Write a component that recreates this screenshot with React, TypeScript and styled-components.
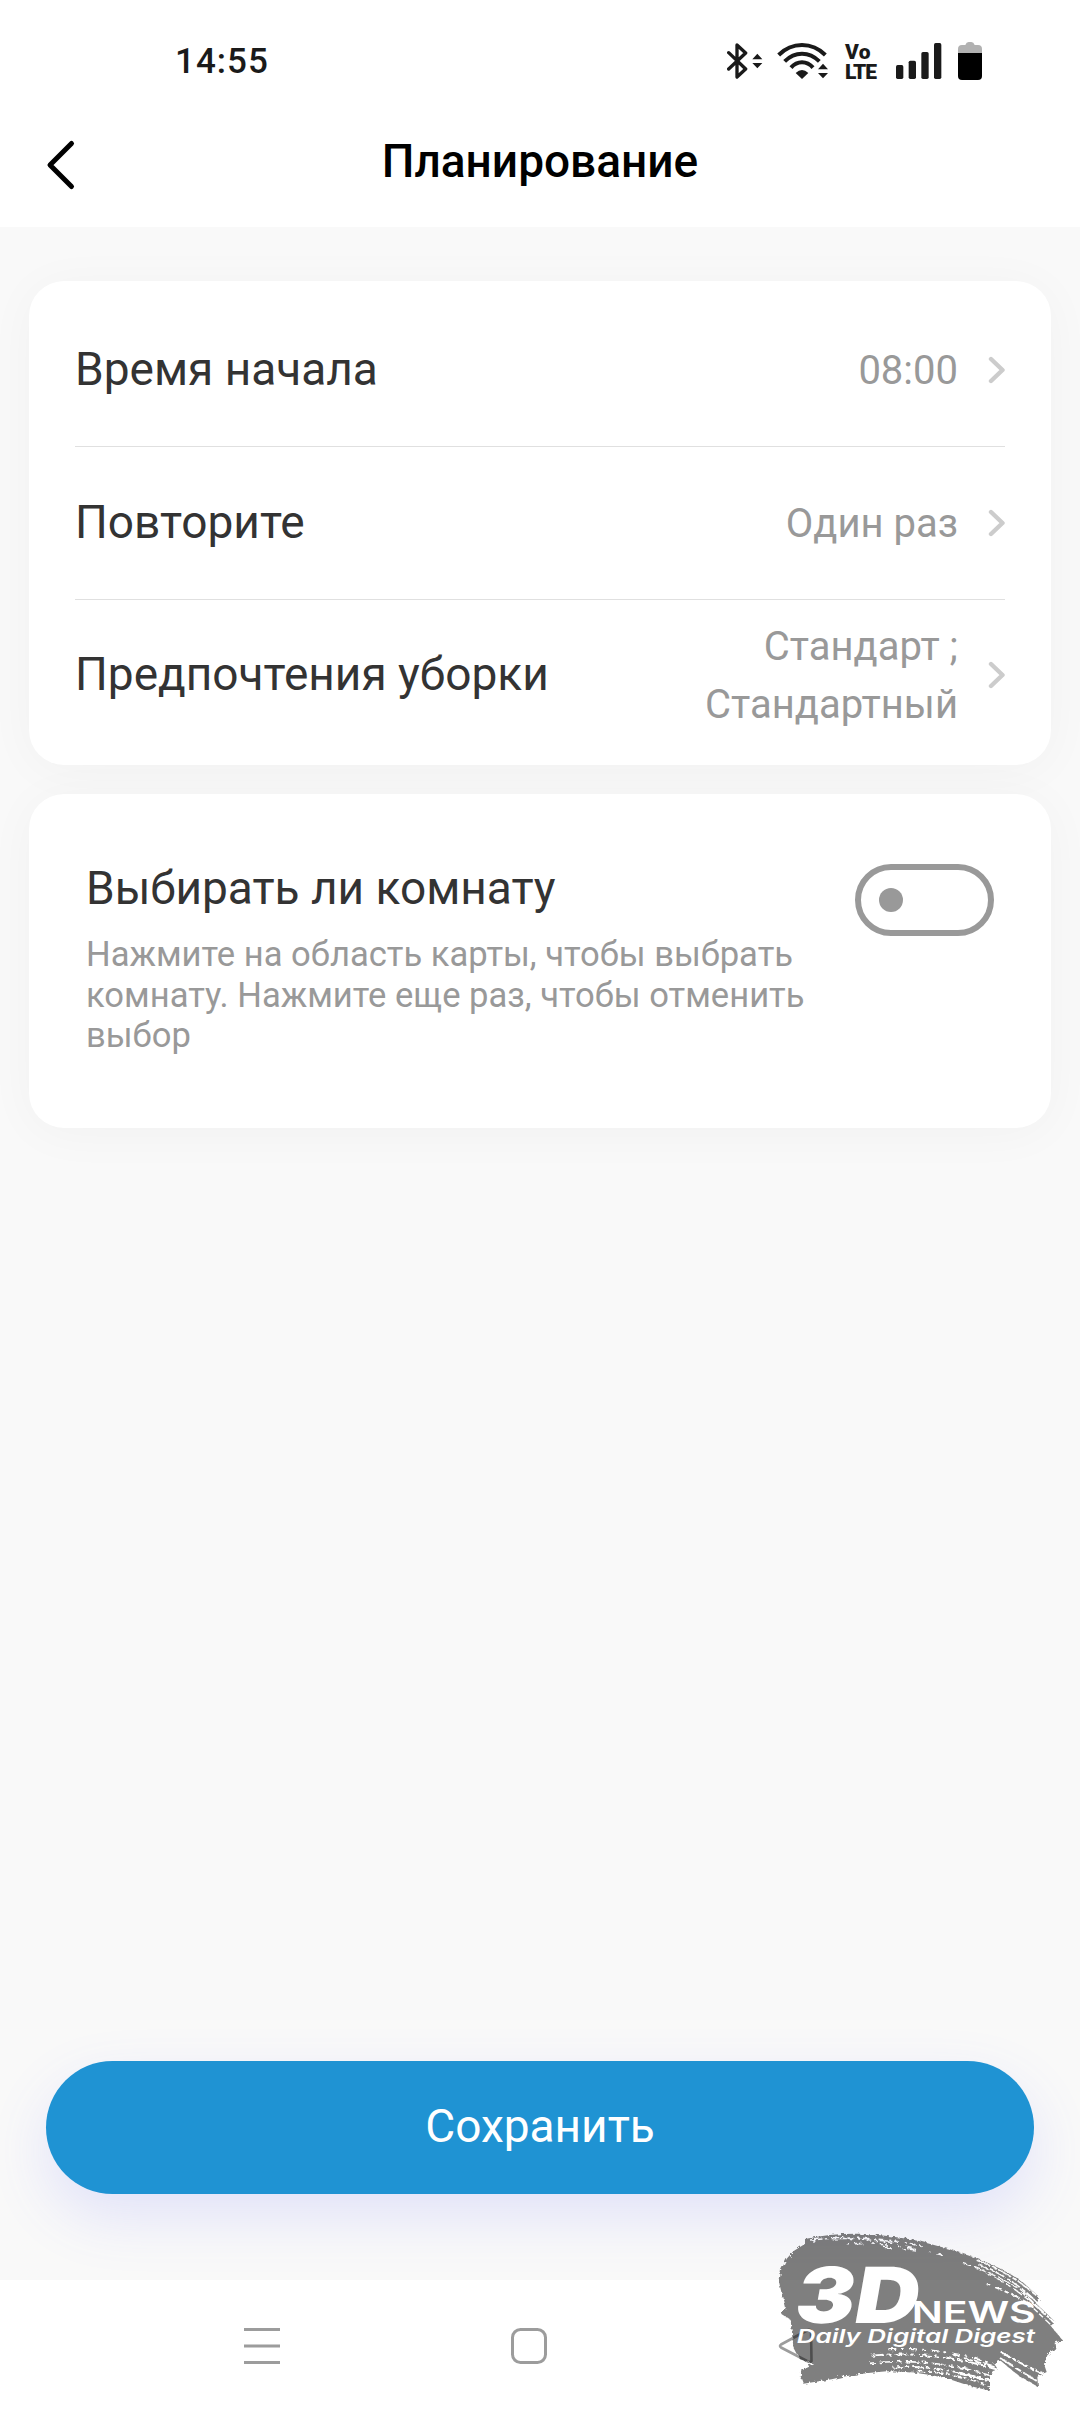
import React, { useState } from "react";
import styled, { createGlobalStyle } from "styled-components";

const GlobalStyle = createGlobalStyle`
  * { box-sizing: border-box; }
  body { margin: 0; background: #f9f9f9; font-family: Roboto, "Noto Sans", sans-serif; }
  button { font-family: inherit; border: 0; padding: 0; background: none; }
`;

const Screen = styled.div`
  position: relative;
  width: 1080px;
  height: 2412px;
  display: flex;
  flex-direction: column;
  background: #f9f9f9;
  overflow: hidden;
`;

const StatusBar = styled.div`
  height: 121px;
  padding: 0 98px 0 175px;
  display: flex;
  align-items: center;
  justify-content: space-between;
  background: #fff;
  color: #1a1a1a;
`;

const Clock = styled.span`
  padding-top: 2px;
  font-size: 35px;
  font-weight: 500;
  letter-spacing: 1px;
`;

const StatusIcons = styled.div`
  padding-top: 1px;
  display: flex;
  align-items: center;
  gap: 14px;
  svg { display: block; }
`;

const VoLte = styled.div`
  width: 39px;
  padding: 1px 0 0 2px;
  display: flex;
  flex-direction: column;
  font-size: 21px;
  line-height: 20px;
  font-weight: 900;
`;

const VoLteLine = styled.span<{ $spacing: number }>`
  letter-spacing: ${(p) => p.$spacing}px;
`;

const Header = styled.header`
  height: 106px;
  padding: 0 46px 26px;
  display: grid;
  grid-template-columns: 30px 1fr 30px;
  align-items: center;
  background: #fff;
`;

const BackButton = styled.button`
  padding-top: 8px;
  svg { display: block; }
`;

const Title = styled.h1`
  margin: 0;
  text-align: center;
  font-size: 46px;
  font-weight: 500;
  line-height: 54px;
  color: #000;
`;

const Content = styled.main`
  flex: 1;
  padding: 54px 29px 86px;
  display: flex;
  flex-direction: column;
  gap: 29px;
`;

const Card = styled.section`
  border-radius: 35px;
  background: #fff;
  box-shadow: 0 5px 50px rgba(0, 0, 0, 0.036);
`;

const SettingsCard = styled(Card)`
  height: 484px;
  padding: 13px 46px;
`;

const Row = styled.div`
  height: 153px;
  display: flex;
  align-items: center;
  border-bottom: 1px solid #e0e0e0;
  &:last-child {
    height: 150px;
    border-bottom: 0;
  }
`;

const Label = styled.span`
  flex: 1;
  padding-bottom: 2px;
  font-size: 46px;
  line-height: 54px;
  color: #333;
`;

const Value = styled.span`
  max-width: 270px;
  padding-top: 2px;
  margin-right: 29px;
  text-align: right;
  font-size: 40px;
  line-height: 58px;
  color: #999;
`;

const RoomCard = styled(Card)`
  height: 334px;
  padding: 67px 57px 0;
  display: flex;
  justify-content: space-between;
  align-items: flex-start;
`;

const RoomText = styled.div`
  width: 740px;
  display: flex;
  flex-direction: column;
  gap: 17px;
`;

const Description = styled.p`
  margin: 0;
  font-size: 34.6px;
  line-height: 40.5px;
  color: #999;
`;

const Toggle = styled.button<{ $on: boolean }>`
  flex: none;
  width: 139px;
  height: 72px;
  margin-top: 3px;
  padding: 0 18px;
  display: flex;
  align-items: center;
  justify-content: ${(p) => (p.$on ? "flex-end" : "flex-start")};
  border: 6px solid ${(p) => (p.$on ? "#1f93d3" : "#999")};
  border-radius: 36px;
`;

const Knob = styled.span<{ $on: boolean }>`
  width: 24px;
  height: 24px;
  border-radius: 50%;
  background: ${(p) => (p.$on ? "#1f93d3" : "#999")};
`;

const SaveButton = styled.button`
  height: 133px;
  margin: auto 17px 0;
  padding-bottom: 3px;
  border-radius: 66.5px;
  background: #1f93d3;
  color: #fff;
  font-size: 46px;
  line-height: 54px;
  box-shadow: 0 23px 58px rgba(91, 103, 255, 0.15);
`;

const NavBar = styled.nav`
  height: 132px;
  padding: 0 266px 0 244px;
  display: flex;
  align-items: center;
  justify-content: space-between;
  background: #fff;
  svg { display: block; }
`;

const Watermark = styled.svg`
  position: absolute;
  right: 0;
  bottom: 0;
`;

const Chevron = () => (
  <svg width="18" height="28" viewBox="0 0 18 28" fill="none">
    <path d="M4 3 L15.5 14 L4 25" stroke="#ccc" strokeWidth="4.4" strokeLinecap="round" strokeLinejoin="round" />
  </svg>
);

const BluetoothIcon = () => (
  <svg width="36" height="38" viewBox="81 66 108 114">
    <path d="M86 98 L137 147 L111 171 V75 L137 99 L86 147" fill="none" stroke="#1a1a1a" strokeWidth="10" strokeLinejoin="round" strokeLinecap="round" />
    <path d="M157 118 L172 101 L187 118Z M157 129 L172 145 L187 129Z" fill="#1a1a1a" />
  </svg>
);

const WifiIcon = () => (
  <svg width="52" height="38" viewBox="231 66 156 114">
    <g fill="none" stroke="#1a1a1a" strokeWidth="12">
      <path d="M236 105 Q266 75 306 75 Q346 75 376 105" />
      <path d="M254 124 Q277 101 306 101 Q335 101 358 124" />
      <path d="M273 143 Q287 127 306 127 Q325 127 339 143" />
    </g>
    <path d="M287 159 Q306 141 325 159 L306 177Z" fill="#1a1a1a" />
    <path d="M354 148 L369 131 L384 148Z M354 159 L369 175 L384 159Z" fill="#1a1a1a" />
  </svg>
);

const SignalIcon = () => (
  <svg width="48" height="36" viewBox="588 69 144 108" fill="#1a1a1a">
    <rect x="588" y="135" width="22" height="42" rx="5" />
    <rect x="626" y="122" width="22" height="55" rx="5" />
    <rect x="664" y="96" width="22" height="81" rx="5" />
    <rect x="702" y="69" width="22" height="108" rx="5" />
  </svg>
);

const BatteryIcon = () => (
  <svg width="24" height="40" viewBox="774 60 72 120">
    <path d="M774 96 V84 Q774 72 786 72 H796 Q799 63 806 63 H814 Q821 63 824 72 H834 Q846 72 846 84 V96Z" fill="#b1b1b1" />
    <path d="M774 96 H846 V165 Q846 177 834 177 H786 Q774 177 774 165Z" fill="#000" />
  </svg>
);

const BrushLogo = () => (
  <Watermark width="320" height="202" viewBox="0 0 960 606">
    <defs>
      <filter id="rough" x="-5%" y="-5%" width="110%" height="110%">
        <feTurbulence type="fractalNoise" baseFrequency="0.09" numOctaves="3" seed="4" result="n" />
        <feDisplacementMap in="SourceGraphic" in2="n" scale="16" />
      </filter>
      <mask id="strokes" maskUnits="userSpaceOnUse" x="0" y="0" width="960" height="606">
        <g filter="url(#rough)">
          <path
            fill="#fff"
            d="M135 87 Q210 70 300 71 Q400 76 480 94 Q565 114 650 145 Q735 178 790 218 L842 265 L828 280 L886 336 L872 347 L907 390 L884 398 L886 414 L862 436 L852 462 L860 486 L832 500 L834 530 L780 500 L722 452 L700 460 L712 475 L690 490 L690 542 L630 528 L560 505 Q470 484 380 484 Q280 492 215 508 L130 521 L122 500 L124 478 L160 459 L120 448 L100 410 L92 330 L63 311 L76 298 L58 220 L63 180 L80 146 L100 124 L138 100Z"
          />
          <g fill="none" stroke="#000">
            <path d="M150 90 Q260 78 400 98" strokeWidth="4" strokeDasharray="38 7 12 16" />
            <path d="M215 86 Q360 78 490 110" strokeWidth="5" strokeDasharray="18 14 6 9" />
            <path d="M260 101 Q380 98 490 122" strokeWidth="5" strokeDasharray="8 17 22 30" />
            <path d="M370 112 Q500 118 580 145" strokeWidth="4" strokeDasharray="22 36 9 12" />
            <path d="M650 151 Q760 190 850 275" strokeWidth="5" strokeDasharray="44 5 18 4" />
            <path d="M655 164 Q765 204 845 292" strokeWidth="5" strokeDasharray="30 7 14 5" />
            <path d="M610 160 Q750 205 842 286" strokeWidth="4" strokeDasharray="24 9 40 6" />
            <path d="M680 190 Q770 232 850 310" strokeWidth="4" strokeDasharray="15 10 33 9" />
            <path d="M680 222 Q760 250 820 290" strokeWidth="6" strokeDasharray="14 12 24 7" />
            <path d="M790 250 L885 340" strokeWidth="6" strokeDasharray="12 5 25 5" />
            <path d="M800 275 L875 347" strokeWidth="4" strokeDasharray="20 6" />
            <path d="M385 418 Q540 410 700 462" strokeWidth="6" strokeDasharray="24 14 8 18" />
            <path d="M335 437 Q520 420 710 478" strokeWidth="6" strokeDasharray="36 9 14 12" />
            <path d="M330 460 Q520 440 700 500" strokeWidth="5" strokeDasharray="16 11 42 10" />
            <path d="M400 473 Q530 460 695 516" strokeWidth="6" strokeDasharray="30 8 10 12" />
            <path d="M450 485 Q570 480 690 530" strokeWidth="5" strokeDasharray="12 9 26 7" />
            <path d="M580 435 L720 476" strokeWidth="5" strokeDasharray="19 8 34 7" />
            <path d="M600 490 L690 512" strokeWidth="8" strokeDasharray="20 6" />
            <path d="M725 428 Q790 465 850 492" strokeWidth="6" strokeDasharray="32 7 12 6" />
            <path d="M720 444 L835 516" strokeWidth="6" strokeDasharray="48 6 20 8" />
          </g>
        </g>
      </mask>
    </defs>
    <rect width="960" height="606" fill="#000" fillOpacity="0.5" mask="url(#strokes)" />
    <g fill="#fff" fontFamily="Inter, Roboto, sans-serif">
      <text transform="translate(96 340) skewX(-10)" fontSize="232" fontWeight="900" textLength="372" lengthAdjust="spacingAndGlyphs">3D</text>
      <text x="455" y="339" fontSize="90" fontWeight="600" textLength="372" lengthAdjust="spacingAndGlyphs">NEWS</text>
      <text x="110" y="398" fontSize="57" fontWeight="600" fontStyle="italic" textLength="715" lengthAdjust="spacingAndGlyphs">Daily Digital Digest</text>
    </g>
  </Watermark>
);

const settings = [
  { label: "Время начала", value: "08:00" },
  { label: "Повторите", value: "Один раз" },
  { label: "Предпочтения уборки", value: "Стандарт ; Стандартный" },
];

export default function App() {
  const [pickRoom, setPickRoom] = useState(false);
  return (
    <Screen>
      <GlobalStyle />
      <StatusBar>
        <Clock>14:55</Clock>
        <StatusIcons>
          <BluetoothIcon />
          <WifiIcon />
          <VoLte>
            <VoLteLine $spacing={0.3}>Vo</VoLteLine>
            <VoLteLine $spacing={-1.2}>LTE</VoLteLine>
          </VoLte>
          <SignalIcon />
          <BatteryIcon />
        </StatusIcons>
      </StatusBar>
      <Header>
        <BackButton aria-label="Назад">
          <svg width="30" height="52" viewBox="0 0 30 52" fill="none">
            <path d="M25.5 4.5 L4 26 L25.5 47.5" stroke="#000" strokeWidth="5" strokeLinecap="round" strokeLinejoin="round" />
          </svg>
        </BackButton>
        <Title>Планирование</Title>
      </Header>
      <Content>
        <SettingsCard>
          {settings.map((s) => (
            <Row key={s.label}>
              <Label>{s.label}</Label>
              <Value>{s.value}</Value>
              <Chevron />
            </Row>
          ))}
        </SettingsCard>
        <RoomCard>
          <RoomText>
            <Label>Выбирать ли комнату</Label>
            <Description>
              Нажмите на область карты, чтобы выбрать комнату. Нажмите еще раз, чтобы отменить выбор
            </Description>
          </RoomText>
          <Toggle $on={pickRoom} onClick={() => setPickRoom(!pickRoom)} aria-pressed={pickRoom}>
            <Knob $on={pickRoom} />
          </Toggle>
        </RoomCard>
        <SaveButton>Сохранить</SaveButton>
      </Content>
      <NavBar>
        <svg width="36" height="36" viewBox="0 0 36 36" stroke="#9c9c9c" strokeWidth="3">
          <path d="M0 1.5 H36 M0 18 H36 M0 34.5 H36" />
        </svg>
        <svg width="36" height="36" viewBox="0 0 36 36" fill="none" stroke="#9c9c9c" strokeWidth="3">
          <rect x="1.5" y="1.5" width="33" height="33" rx="8" />
        </svg>
        <svg width="36" height="36" viewBox="0 0 36 36" fill="none" stroke="#9c9c9c" strokeWidth="2.6" strokeLinejoin="round">
          <path d="M33 2.5 Q31 1 29 2.5 L3 16.5 Q1 18 3 19.5 L29 33 Q32 35 33.5 33Z" />
        </svg>
      </NavBar>
      <BrushLogo />
    </Screen>
  );
}
